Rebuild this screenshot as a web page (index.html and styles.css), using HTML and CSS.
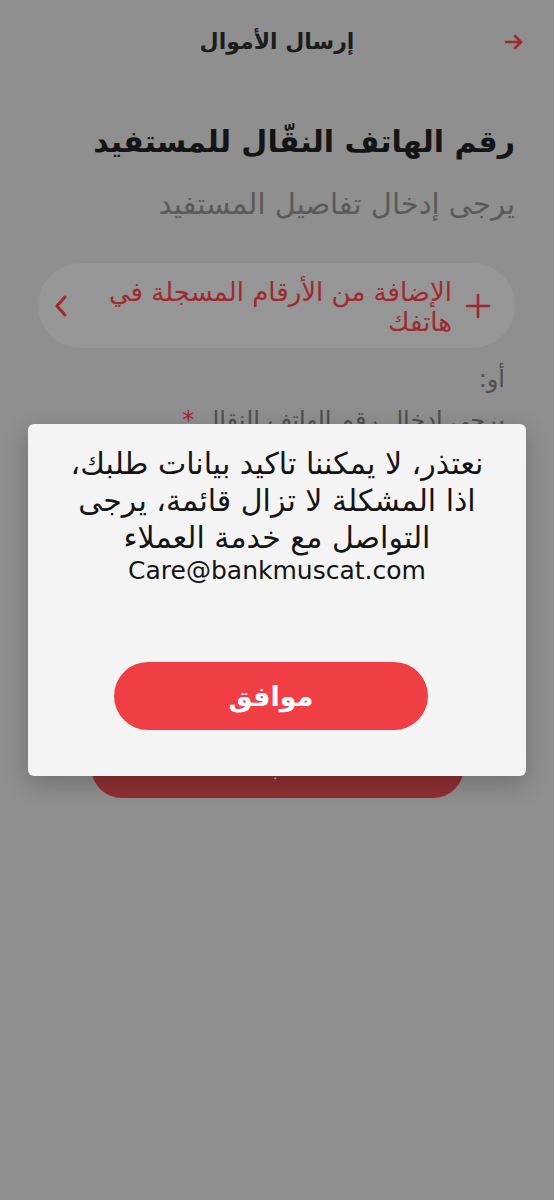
FILE: index.html
```html
<!DOCTYPE html>
<html lang="ar" dir="rtl">
<head>
<meta charset="utf-8">
<title>إرسال الأموال</title>
<link rel="stylesheet" href="styles.css">
</head>
<body>
<div class="screen">
  <header class="topbar">
    <span class="back">
      <svg width="20" height="18" viewBox="0 0 20 18"><path d="M2 9H17M11 3L17 9L11 15" fill="none" stroke="#a0282f" stroke-width="2.6" stroke-linecap="round" stroke-linejoin="round"/></svg>
    </span>
    <span class="title">إرسال الأموال</span>
    <span></span>
  </header>
  <main class="content">
    <h1 class="heading">رقم الهاتف النقّال للمستفيد</h1>
    <p class="sub">يرجى إدخال تفاصيل المستفيد</p>
    <div class="pick-card">
      <svg class="plus" width="26" height="26" viewBox="0 0 26 26"><path d="M13 2V24M2 13H24" stroke="#a0282f" stroke-width="2.6" stroke-linecap="round"/></svg>
      <span class="pick-text">الإضافة من الأرقام المسجلة في<br>هاتفك</span>
      <svg class="chev" width="16" height="24" viewBox="0 0 16 24"><path d="M12 3L4 12L12 21" fill="none" stroke="#a0282f" stroke-width="3" stroke-linecap="round" stroke-linejoin="round"/></svg>
    </div>
    <p class="or">أو:</p>
    <p class="label">يرجى إدخال رقم الهاتف النقال <span class="req">*</span></p>
    <div class="field"></div>
    <button class="continue">متابعة</button>
  </main>
  <div class="dialog">
    <p class="msg">نعتذر، لا يمكننا تاكيد بيانات طلبك،<br>اذا المشكلة لا تزال قائمة، يرجى<br>التواصل مع خدمة العملاء</p>
    <p class="email">Care@bankmuscat.com</p>
    <button class="ok">موافق</button>
  </div>
</div>
</body>
</html>
```
FILE: styles.css
```css
html, body {
  margin: 0;
  padding: 0;
  background: #8f8f8f;
}
body {
  font-family: "DejaVu Sans", sans-serif;
  width: 554px;
  height: 1200px;
  overflow: hidden;
}
.screen {
  position: relative;
  width: 554px;
  height: 1200px;
  background: #8f8f8f;
}
.topbar {
  display: grid;
  grid-template-columns: 1fr auto 1fr;
  align-items: center;
  height: 82px;
  padding: 0 30px 0 30px;
}
.back {
  display: flex;
  justify-content: flex-start;
  padding-top: 2px;
}
.title {
  font-size: 22px;
  font-weight: bold;
  color: #1c1c1c;
}
.content {
  padding: 0 39px 0 38px;
  display: flex;
  flex-direction: column;
}
.heading {
  margin: 40px 0 0 0;
  font-size: 30px;
  line-height: 40px;
  font-weight: bold;
  color: #141414;
}
.sub {
  margin: 24px 0 0 0;
  font-size: 29px;
  line-height: 36px;
  color: #5a5a5a;
}
.pick-card {
  margin-top: 41px;
  height: 85px;
  box-sizing: border-box;
  border-radius: 43px;
  background: #969696;
  display: flex;
  align-items: center;
  padding: 0 24px 0 15px;
  gap: 13px;
}
.plus { flex: none; }
.pick-text {
  flex: 1;
  font-size: 26px;
  line-height: 30px;
  color: #9e2a30;
  margin-top: 2px;
}
.chev { flex: none; }
.or {
  margin: 16px 10px 0 0;
  font-size: 24px;
  line-height: 30px;
  color: #4e4e4e;
}
.label {
  margin: 11px 10px 0 0;
  font-size: 24px;
  line-height: 30px;
  color: #4e4e4e;
}
.req { color: #a0282f; }
.field {
  height: 301px;
}
.continue {
  align-self: center;
  width: 373px;
  height: 62px;
  margin-right: -2px;
  border: none;
  border-radius: 31px;
  background: #8f3034;
  color: #c8c8c8;
  font-family: "DejaVu Sans", sans-serif;
  font-size: 22px;
  font-weight: bold;
}
.dialog {
  position: absolute;
  left: 28px;
  top: 424px;
  width: 498px;
  height: 352px;
  box-sizing: border-box;
  background: #f4f4f4;
  border-radius: 6px;
  box-shadow: 0 8px 24px rgba(0, 0, 0, 0.22);
  display: flex;
  flex-direction: column;
  padding-top: 21px;
}
.msg {
  margin: 0;
  text-align: center;
  font-size: 30px;
  line-height: 37px;
  color: #141414;
}
.email {
  margin: 0;
  text-align: center;
  font-size: 25px;
  line-height: 30px;
  color: #141414;
}
.ok {
  margin: 76px 0 0 86px;
  align-self: flex-end;
  width: 314px;
  height: 68px;
  border: none;
  border-radius: 34px;
  background: #ef3e44;
  color: #ffffff;
  font-family: "DejaVu Sans", sans-serif;
  font-size: 27px;
  font-weight: bold;
}
```
